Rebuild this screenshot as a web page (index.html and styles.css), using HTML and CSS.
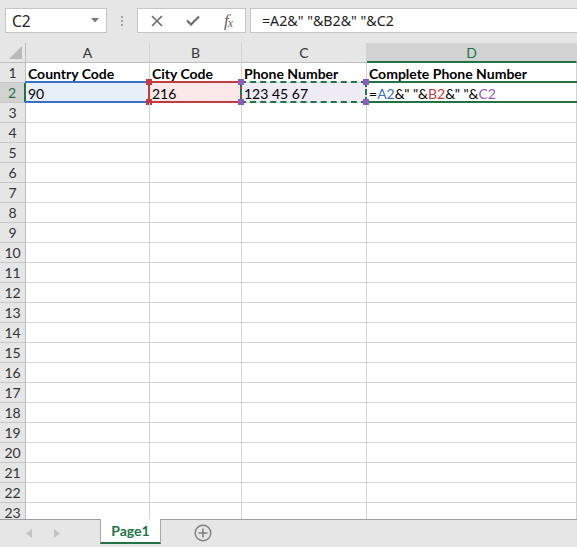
FILE: index.html
```html
<!DOCTYPE html>
<html>
<head>
<meta charset="utf-8">
<link rel="stylesheet" href="styles.css">
</head>
<body>
<div class="app">
  <div class="toolbar">
    <div class="namebox">
      <span class="name">C2</span>
      <svg class="dd" width="8" height="5" viewBox="0 0 8 5"><path d="M0 0H8L4 4.5Z" fill="#7a7a7a"/></svg>
    </div>
    <div class="grip"><i></i><i></i><i></i></div>
    <div class="fxbtns">
      <svg width="12" height="12" viewBox="0 0 12 12"><path d="M1 1L11 11M11 1L1 11" stroke="#6b6b6b" stroke-width="1.6" fill="none"/></svg>
      <svg width="14" height="11" viewBox="0 0 14 11"><path d="M1 5.5L5 9.5L13 1.5" stroke="#6b6b6b" stroke-width="2.2" fill="none"/></svg>
      <span class="fx">f<sub>x</sub></span>
    </div>
    <div class="formula">=A2&amp;" "&amp;B2&amp;" "&amp;C2</div>
  </div>

  <div class="sheet">
    <div class="grid">
      <div class="corner"><svg width="13" height="13" viewBox="0 0 13 13"><path d="M13 0V13H0Z" fill="#b9b9b9"/></svg></div>
      <div class="ch">A</div>
      <div class="ch">B</div>
      <div class="ch">C</div>
      <div class="ch sel">D</div>

      <div class="rh">1</div>
      <div class="c b">Country Code</div>
      <div class="c b">City Code</div>
      <div class="c b">Phone Number</div>
      <div class="c b">Complete Phone Number</div>

      <div class="rh sel">2</div>
      <div class="c fill-blue">90<div class="ref ref-blue"></div></div>
      <div class="c fill-red">216<div class="ref ref-red"><i class="k tl"></i><i class="k tr"></i><i class="k bl"></i><i class="k br"></i></div></div>
      <div class="c fill-purple">123 45 67<div class="ref ref-purple"><i class="k tl"></i><i class="k tr"></i><i class="k bl"></i><i class="k br"></i></div></div>
      <div class="c active">=<span class="t-blue">A2</span>&amp;" "&amp;<span class="t-red">B2</span>&amp;" "&amp;<span class="t-purple">C2</span><div class="edit"></div></div>

      <div class="rh">3</div><div class="c"></div><div class="c"></div><div class="c"></div><div class="c"></div>
      <div class="rh">4</div><div class="c"></div><div class="c"></div><div class="c"></div><div class="c"></div>
      <div class="rh">5</div><div class="c"></div><div class="c"></div><div class="c"></div><div class="c"></div>
      <div class="rh">6</div><div class="c"></div><div class="c"></div><div class="c"></div><div class="c"></div>
      <div class="rh">7</div><div class="c"></div><div class="c"></div><div class="c"></div><div class="c"></div>
      <div class="rh">8</div><div class="c"></div><div class="c"></div><div class="c"></div><div class="c"></div>
      <div class="rh">9</div><div class="c"></div><div class="c"></div><div class="c"></div><div class="c"></div>
      <div class="rh">10</div><div class="c"></div><div class="c"></div><div class="c"></div><div class="c"></div>
      <div class="rh">11</div><div class="c"></div><div class="c"></div><div class="c"></div><div class="c"></div>
      <div class="rh">12</div><div class="c"></div><div class="c"></div><div class="c"></div><div class="c"></div>
      <div class="rh">13</div><div class="c"></div><div class="c"></div><div class="c"></div><div class="c"></div>
      <div class="rh">14</div><div class="c"></div><div class="c"></div><div class="c"></div><div class="c"></div>
      <div class="rh">15</div><div class="c"></div><div class="c"></div><div class="c"></div><div class="c"></div>
      <div class="rh">16</div><div class="c"></div><div class="c"></div><div class="c"></div><div class="c"></div>
      <div class="rh">17</div><div class="c"></div><div class="c"></div><div class="c"></div><div class="c"></div>
      <div class="rh">18</div><div class="c"></div><div class="c"></div><div class="c"></div><div class="c"></div>
      <div class="rh">19</div><div class="c"></div><div class="c"></div><div class="c"></div><div class="c"></div>
      <div class="rh">20</div><div class="c"></div><div class="c"></div><div class="c"></div><div class="c"></div>
      <div class="rh">21</div><div class="c"></div><div class="c"></div><div class="c"></div><div class="c"></div>
      <div class="rh">22</div><div class="c"></div><div class="c"></div><div class="c"></div><div class="c"></div>
      <div class="rh">23</div><div class="c"></div><div class="c"></div><div class="c"></div><div class="c"></div>
    </div>
  </div>

  <div class="tabbar">
    <div class="navs">
      <svg width="6" height="9" viewBox="0 0 6 9"><path d="M6 0V9L0 4.5Z" fill="#c4c4c4"/></svg>
      <svg width="6" height="9" viewBox="0 0 6 9"><path d="M0 0V9L6 4.5Z" fill="#c4c4c4"/></svg>
    </div>
    <div class="tab">Page1</div>
    <div class="add">
      <svg width="18" height="18" viewBox="0 0 18 18"><circle cx="9" cy="9" r="7.8" stroke="#7f7f7f" stroke-width="1.4" fill="none"/><path d="M9 4.5V13.5M4.5 9H13.5" stroke="#7f7f7f" stroke-width="1.6"/></svg>
    </div>
  </div>
</div>
</body>
</html>
```
FILE: styles.css
```css
* { box-sizing: border-box; }
html, body { margin: 0; padding: 0; }
body { width: 577px; height: 547px; overflow: hidden; background: #fff; }
.app { display: flex; flex-direction: column; height: 547px; }

.toolbar {
  height: 43px; flex: none; background: #e6e6e6;
  display: flex; align-items: flex-start; padding-top: 8px;
  font-family: "Noto Sans", "DejaVu Sans", sans-serif;
}
.namebox {
  margin-left: 5px; width: 102px; height: 25px; background: #fff;
  border: 1px solid #c6c6c6; display: flex; align-items: center;
  justify-content: space-between; padding: 0 7px 0 6px;
}
.name { font-size: 15.5px; color: #222; }
.grip { width: 30px; height: 25px; display: flex; flex-direction: column; align-items: center; justify-content: center; gap: 2px; }
.grip i { display: block; width: 2px; height: 2px; background: #a5a5a5; }
.fxbtns {
  width: 109px; height: 25px; background: #fff; border: 1px solid #c6c6c6;
  display: flex; align-items: center; justify-content: space-between; padding: 0 12px 0 13px;
}
.fx { font-family: "Liberation Serif", serif; font-style: italic; font-size: 17px; color: #5f5f5f; line-height: 1; }
.fx sub { font-size: 12px; vertical-align: -1px; margin-left: -1px; }
.formula {
  margin-left: 4px; flex: 1; height: 25px; background: #fff; border: 1px solid #c6c6c6; border-right: none;
  padding-left: 11px; font-size: 14.2px; color: #222; display: flex; align-items: center; white-space: pre;
}

.sheet { flex: 1; overflow: hidden; position: relative; }
.grid {
  display: grid; grid-template-columns: 26px 124px 92px 125px 210px; grid-auto-rows: 20px;
  font-family: "Lato", "Liberation Sans", sans-serif; font-size: 14px; color: #000;
}
.grid > div { border-right: 1px solid #d4d4d4; border-bottom: 1px solid #d4d4d4; }
.corner { background: #e6e6e6; display: flex; align-items: flex-end; justify-content: flex-end; padding: 0 3px 3px 0; border-color: #bdbdbd !important; }
.ch { background: #e6e6e6; text-align: center; line-height: 19px; color: #333; border-bottom-color: #bdbdbd !important; }
.ch.sel { background: #d2d2d2; color: #217346; border-bottom: 2px solid #217346 !important; }
.rh { background: #e6e6e6; text-align: center; line-height: 20px; color: #333; border-right-color: #bdbdbd !important; border-bottom-color: #c8c8c8 !important; }
.rh.sel { background: #d2d2d2; color: #217346; border-right: 2px solid #217346 !important; }

.c { position: relative; padding-left: 2px; line-height: 21px; white-space: nowrap; }
.c.b { font-weight: bold; }
.fill-blue { background: #e9eff8; }
.fill-red { background: #fbe8e9; }
.fill-purple { background: #efebf5; }

.ref { position: absolute; top: -2px; bottom: -1px; left: -2px; right: -1px; border: 2px solid; }
.ref-blue { border-color: #3a70c4; left: -1px; border-left: none; }
.ref-red { border-color: #c23b3e; }
.ref-purple { border: 2px dashed #217346; z-index: 3; }
.k { position: absolute; width: 6px; height: 6px; }
.ref-red .k { background: #c23b3e; }
.ref-purple .k { background: #8a5cc0; }
.k.tl { top: -4px; left: -4px; }
.k.tr { top: -4px; right: -4px; }
.k.bl { bottom: -4px; left: -4px; }
.k.br { bottom: -4px; right: -4px; }

.active { z-index: 1; }
.edit { position: absolute; top: -2px; bottom: -1px; left: -1px; right: -4px; border-top: 2px solid #217346; border-bottom: 2px solid #217346; }
.t-blue { color: #3a70c4; }
.t-red { color: #c23b3e; }
.t-purple { color: #8a5cc0; }

.tabbar {
  height: 28px; flex: none; background: #e6e6e6; border-top: 1px solid #9e9e9e;
  display: flex; align-items: flex-start;
}
.navs { width: 100px; height: 26px; display: flex; align-items: center; gap: 22px; padding-left: 26px; }
.tab {
  margin-top: -1px; width: 61px; height: 25px; background: #fff;
  border: 1px solid #a8a8a8; border-top: none; border-bottom: 2px solid #217346;
  font-family: "Lato", "Liberation Sans", sans-serif; font-weight: bold; font-size: 14px;
  color: #217346; text-align: center; line-height: 24px;
}
.add { margin-left: 33px; height: 26px; display: flex; align-items: center; }
```
